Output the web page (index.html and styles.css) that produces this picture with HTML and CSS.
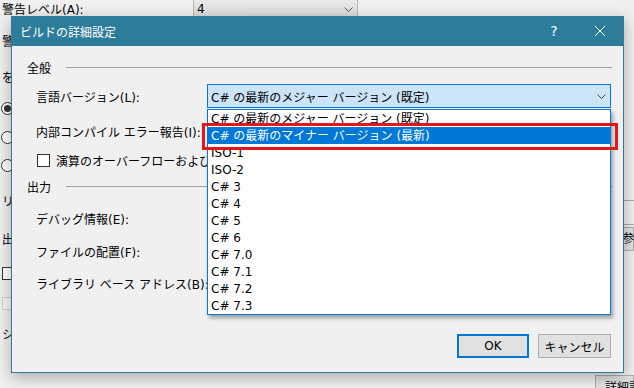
FILE: index.html
```html
<!DOCTYPE html>
<html lang="ja">
<head>
    <meta charset="UTF-8">
    <title>ビルドの詳細設定</title>
    <link rel="stylesheet" href="styles.css">
</head>
<body>

<!-- 背景のプロパティ ページ -->
<div class="backdrop">
    <div class="top-row">
        <span class="top-label">警告レベル(A):</span>
        <div class="top-combo">
            <span>4</span>
            <svg class="chevron" width="9" height="5" viewBox="0 0 9 5"><path d="M0.5 0.5 L4.5 4.5 L8.5 0.5" fill="none" stroke="#555" stroke-width="1"/></svg>
        </div>
    </div>
    <div class="backdrop-main">
        <div class="left-col">
            <div class="bg-row">警告を表示しない(N):</div>
            <div class="bg-row">をエラーとして扱う</div>
            <div class="bg-row"><span class="radio checked"></span>なし</div>
            <div class="bg-row"><span class="radio"></span>すべて</div>
            <div class="bg-row"><span class="radio"></span>特定の警告</div>
            <div class="bg-row">リソース</div>
            <div class="bg-row">出力パス(O):</div>
            <div class="bg-row"><span class="check"></span>XML ドキュメント ファイル</div>
            <div class="bg-row"><span class="check disabled"></span>COM 相互運用機能に登録</div>
            <div class="bg-row">シリアル化アセンブリを生成</div>
        </div>
        <div class="right-col">
            <div class="bg-textbox"></div>
            <div class="bg-button">参照...</div>
            <div class="bg-button detail">詳細設定...</div>
        </div>
    </div>
</div>

<!-- ダイアログ -->
<div class="dialog">
    <div class="titlebar">
        <span class="title">ビルドの詳細設定</span>
        <span class="title-btn help">?</span>
        <span class="title-btn">
            <svg width="10" height="10" viewBox="0 0 10 10"><path d="M0 0 L10 10 M10 0 L0 10" stroke="#fff" stroke-width="1"/></svg>
        </span>
    </div>

    <div class="dialog-body">
        <div class="group-head"><span>全般</span><span class="group-line"></span></div>

        <div class="field first">
            <label class="field-label">言語バージョン(L):</label>
            <div class="select">
                <span>C# の最新のメジャー バージョン (既定)</span>
                <svg class="chevron" width="9" height="5" viewBox="0 0 9 5"><path d="M0.5 0.5 L4.5 4.5 L8.5 0.5" fill="none" stroke="#444" stroke-width="1"/></svg>

                <ul class="dropdown">
                    <li>C# の最新のメジャー バージョン (既定)</li>
                    <li class="selected">C# の最新のマイナー バージョン (最新)</li>
                    <li>ISO-1</li>
                    <li>ISO-2</li>
                    <li>C# 3</li>
                    <li>C# 4</li>
                    <li>C# 5</li>
                    <li>C# 6</li>
                    <li>C# 7.0</li>
                    <li>C# 7.1</li>
                    <li>C# 7.2</li>
                    <li>C# 7.3</li>
                </ul>
                <div class="mark"></div>
            </div>
        </div>

        <div class="field second">
            <label class="field-label">内部コンパイル エラー報告(I):</label>
        </div>

        <div class="check-row">
            <span class="check"></span>
            <span>演算のオーバーフローおよびアンダーフローのチェック(K)</span>
        </div>

        <div class="group-head out"><span>出力</span><span class="group-line"></span></div>

        <div class="field debug">
            <label class="field-label">デバッグ情報(E):</label>
        </div>
        <div class="field align">
            <label class="field-label">ファイルの配置(F):</label>
        </div>
        <div class="field base">
            <label class="field-label">ライブラリ ベース アドレス(B):</label>
        </div>

        <div class="footer">
            <button class="btn default">OK</button>
            <button class="btn">キャンセル</button>
        </div>
    </div>
</div>

</body>
</html>
```

FILE: styles.css
```css
body {
    margin: 0;
    width: 634px;
    height: 388px;
    overflow: hidden;
    position: relative;
    background-color: #f0f0f0;
    color: #000;
    font-family: "DejaVu Sans", "Noto Sans CJK JP", sans-serif;
    font-size: 12px;
}

/* 背景 */
.backdrop {
    display: flex;
    flex-direction: column;
    height: 100%;
    overflow: hidden;
}
.top-row {
    display: flex;
    flex-shrink: 0;
    height: 16px;
    overflow: hidden;
}
.top-label {
    width: 191px;
    padding: 2px 0 0 2px;
    line-height: 16px;
    white-space: nowrap;
}
.top-combo {
    width: 165px;
    box-sizing: border-box;
    border-left: 1px solid #b5b5b5;
    border-right: 1px solid #b5b5b5;
    background: linear-gradient(#e9e9e9, #dcdcdc);
    display: flex;
    align-items: center;
    padding: 2px 4px 0 3px;
}
.top-combo span {
    flex: 1;
}
.backdrop-main {
    flex: 1;
    min-height: 0;
    display: flex;
}
.left-col {
    display: grid;
    grid-template-rows: 36px 30px 29px 28px 37px 38px 33px 30px 32px 16px;
    padding-top: 18px;
    width: 200px;
}
.bg-row {
    display: flex;
    align-items: center;
    height: 16px;
    line-height: 16px;
    padding-left: 2px;
    white-space: nowrap;
    gap: 4px;
}
.radio {
    width: 11px;
    height: 11px;
    border: 1px solid #333;
    border-radius: 50%;
    background: #fff;
    display: flex;
    align-items: center;
    justify-content: center;
    margin-left: -1px;
}
.radio.checked::after {
    content: "";
    width: 7px;
    height: 7px;
    border-radius: 50%;
    background: #333;
}
.check {
    width: 11px;
    height: 11px;
    border: 1px solid #333;
    background: #fff;
    flex-shrink: 0;
}
.check.disabled {
    border-color: #ccc;
    background: #f6f6f6;
}
.right-col {
    margin-left: auto;
    width: 40px;
    display: flex;
    flex-direction: column;
}
.bg-textbox {
    flex-shrink: 0;
    margin-top: 184px;
    height: 25px;
    box-sizing: border-box;
    border-top: 1px solid #a8a8a8;
    border-bottom: 1px solid #a8a8a8;
}
.bg-button {
    flex-shrink: 0;
    margin: 2px 0 0 16px;
    height: 24px;
    box-sizing: border-box;
    border: 1px solid #adadad;
    background: #e1e1e1;
    padding-left: 11px;
    line-height: 22px;
    white-space: nowrap;
}
.bg-button.detail {
    margin: 124px 0 0 1px;
    height: 30px;
    padding: 1px 0 0 9px;
}

/* ダイアログ */
.dialog {
    position: absolute;
    left: 11px;
    top: 16px;
    width: 613px;
    height: 357px;
    box-sizing: border-box;
    border: 1px solid #2d7d9a;
    border-top: none;
    background-color: #f0f0f0;
    box-shadow: 0 4px 14px rgba(0, 0, 0, 0.3);
    display: flex;
    flex-direction: column;
}
.titlebar {
    height: 30px;
    background-color: #2d7d9a;
    color: #fff;
    display: flex;
    align-items: center;
    padding-left: 8px;
}
.title {
    flex: 1;
}
.title-btn {
    width: 46px;
    height: 30px;
    display: flex;
    align-items: center;
    justify-content: center;
}
.title-btn.help {
    font-size: 14px;
}
.dialog-body {
    flex: 1;
    display: flex;
    flex-direction: column;
    padding: 15px 11px 14px 0;
}
.group-head {
    display: flex;
    align-items: center;
    height: 16px;
    line-height: 16px;
    padding-left: 15px;
}
.group-head.out {
    margin-top: 12px;
}
.group-line {
    flex: 1;
    height: 1px;
    background-color: #a0a0a0;
    margin: 0 0 3px 15px;
}
.field {
    display: flex;
    align-items: center;
    height: 24px;
}
.field.first { margin-top: 7px; }
.field.second { margin-top: 11px; }
.field.debug { margin-top: 10px; }
.field.align { margin-top: 9px; }
.field.base { margin-top: 8px; }
.field-label {
    width: 195px;
    box-sizing: border-box;
    padding: 1px 0 0 24px;
    white-space: nowrap;
}
.select {
    position: relative;
    width: 404px;
    height: 24px;
    box-sizing: border-box;
    border: 1px solid #0078d7;
    background-color: #cce4f7;
    display: flex;
    align-items: center;
    padding: 0 4px 0 3px;
    white-space: nowrap;
}
.select > span {
    flex: 1;
}
.dropdown {
    position: absolute;
    left: -1px;
    top: calc(100% + 2px);
    width: 404px;
    box-sizing: border-box;
    margin: 0;
    padding: 0;
    list-style: none;
    background-color: #fff;
    border: 1px solid #0078d7;
    box-shadow: 2px 3px 4px rgba(0, 0, 0, 0.35);
    z-index: 2;
}
.dropdown li {
    height: 17px;
    line-height: 19px;
    overflow: hidden;
    padding-left: 3px;
}
.dropdown li.selected {
    background-color: #0078d7;
    color: #fff;
}
.mark {
    position: absolute;
    left: -6px;
    top: 38px;
    width: 416px;
    height: 27px;
    box-sizing: border-box;
    border: 3px solid #e8141c;
    z-index: 3;
}
.check-row {
    display: flex;
    align-items: center;
    gap: 6px;
    height: 16px;
    margin-top: 9px;
    padding-left: 25px;
    white-space: nowrap;
}
.footer {
    margin-top: auto;
    display: flex;
    justify-content: flex-end;
    gap: 9px;
    padding-right: 1px;
}
.btn {
    width: 73px;
    height: 24px;
    box-sizing: border-box;
    border: 1px solid #adadad;
    background-color: #e1e1e1;
    font-family: inherit;
    font-size: 12px;
    color: #000;
    padding: 0;
}
.btn.default {
    width: 72px;
    border: 2px solid #0078d7;
}
```
